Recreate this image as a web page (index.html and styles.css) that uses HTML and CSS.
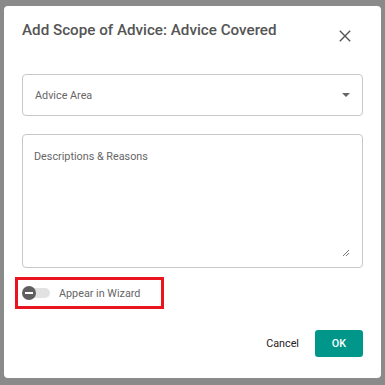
FILE: index.html
```html
<!DOCTYPE html>
<html>
<head>
<meta charset="utf-8">
<link rel="stylesheet" href="styles.css">
</head>
<body>
<div class="backdrop">
  <div class="dialog">
    <div class="header">
      <h1 class="title">Add Scope of Advice: Advice Covered</h1>
      <button class="close" aria-label="close">
        <svg width="12" height="12" viewBox="0 0 12 12"><path d="M0.8 0.8L11.2 11.2M11.2 0.8L0.8 11.2" stroke="#555" stroke-width="1.4" fill="none"/></svg>
      </button>
    </div>
    <div class="select">
      <span class="label">Advice Area</span>
      <svg class="caret" width="8" height="4" viewBox="0 0 8 4"><path d="M0 0H8L4 4Z" fill="#666"/></svg>
    </div>
    <div class="textarea">
      <span class="label">Descriptions &amp; Reasons</span>
      <svg class="grip" width="8" height="8" viewBox="0 0 8 8"><path d="M7 1L1 7M7 4L4 7" stroke="#777" stroke-width="1" fill="none"/></svg>
    </div>
    <div class="toggle-row">
      <span class="switch"><span class="track"></span><span class="knob"><span class="dash"></span></span></span>
      <span class="toggle-label">Appear in Wizard</span>
    </div>
    <div class="actions">
      <button class="cancel">Cancel</button>
      <button class="ok">OK</button>
    </div>
  </div>
</div>
</body>
</html>
```
FILE: styles.css
```css
html, body { margin: 0; padding: 0; }
body { background: #8a8a8a; font-family: Roboto, "Noto Sans", sans-serif; width: 385px; height: 385px; overflow: hidden; }
.backdrop { padding: 6px 4px 0 4px; }
.dialog {
  background: #fff;
  border-radius: 4px;
  height: 372px;
  box-sizing: border-box;
  padding: 0 18px 0 18px;
  display: flex;
  flex-direction: column;
}
.header { display: flex; justify-content: space-between; align-items: flex-start; height: 68px; }
.title { margin: 15px 0 0 0; font-size: 15.2px; font-weight: 500; color: #555; letter-spacing: 0; }
.close { border: 0; background: none; padding: 0; margin: 24px 12px 0 0; width: 12px; height: 12px; display: flex; }
.select {
  height: 42px; border: 1px solid #c8c8c8; border-radius: 4px; box-sizing: border-box;
  display: flex; align-items: center; justify-content: space-between; padding: 0 12px 0 12px;
}
.label { font-size: 10.8px; color: #666; }
.caret { margin-right: 0; }
.textarea {
  margin-top: 18px; height: 134px; border: 1px solid #c8c8c8; border-radius: 4px; box-sizing: border-box;
  position: relative; padding: 10px 11px;
}
.grip { position: absolute; right: 12px; bottom: 10px; }
.toggle-row {
  margin: 9px 0 0 -7px; width: 149px; height: 32px; box-sizing: border-box;
  border: 3px solid #e8141e; display: flex; align-items: center; padding-left: 4px;
}
.switch { position: relative; width: 28px; height: 14px; display: inline-block; }
.track { position: absolute; left: 6px; top: 2px; width: 22px; height: 10px; border-radius: 5px; background: #e2e2e2; }
.knob { position: absolute; left: 0; top: 0; width: 14px; height: 14px; border-radius: 50%; background: #5f5f5f; display: flex; align-items: center; justify-content: center; }
.dash { width: 8px; height: 2px; background: #fff; }
.toggle-label { margin-left: 9px; font-size: 10.8px; color: #666; }
.actions { display: flex; justify-content: flex-end; align-items: center; margin-top: 21px; }
.cancel { border: 0; background: none; font-family: inherit; font-size: 10.8px; color: #222; padding: 0; margin-right: 16px; }
.ok { border: 0; background: #00968a; color: #fff; font-family: inherit; font-size: 10.8px; font-weight: 500; width: 48px; height: 27px; border-radius: 3px; }
```
